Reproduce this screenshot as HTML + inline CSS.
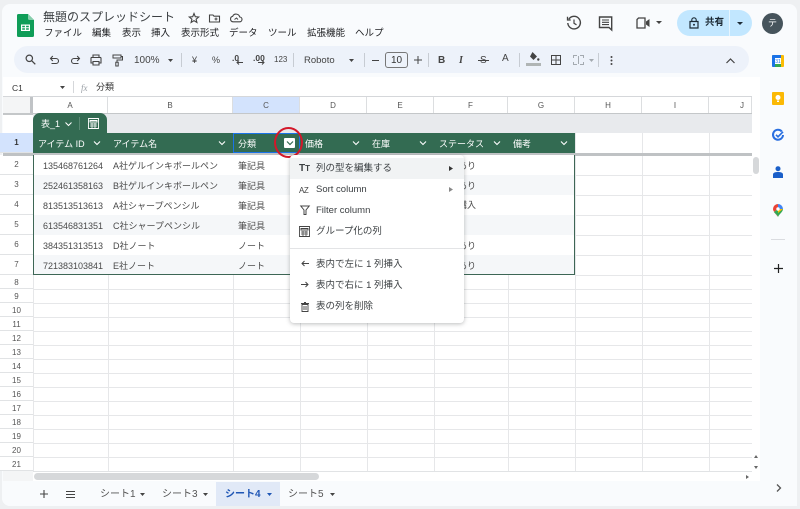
<!DOCTYPE html>
<html lang="ja"><head><meta charset="utf-8"><title>無題のスプレッドシート</title>
<style>
*{box-sizing:border-box}
html{background:#eef0f2}
html,body{margin:0;padding:0;width:800px;height:509px;overflow:hidden;font-family:"Liberation Sans","Noto Sans CJK JP",sans-serif;color:#3c4043}
body{background:#eef0f2;filter:blur(.3px)}
.a{position:absolute}
.t{position:absolute;white-space:nowrap;line-height:14px}
svg{position:absolute;overflow:visible}
.ln{position:absolute;background:#e6e7e9}
.ch{position:absolute;top:97px;height:16px;font-size:8px;line-height:17px;text-align:center;color:#555;border-right:1px solid #dcdee0;background:#fff}
.rh{position:absolute;left:0;width:33px;text-align:center;font-size:8px;color:#555;background:#fff;border-bottom:1px solid #e1e3e5}
.hc{position:absolute;top:137px;font-size:9px;color:#fff;line-height:14px;white-space:nowrap}
.c{position:absolute;font-size:9px;line-height:14px;color:#4a4a4a;white-space:nowrap}
.mi{position:absolute;left:316px;font-size:9.5px;color:#3c4043;line-height:14px;white-space:nowrap}
.mn{position:absolute;top:27px;font-size:9.5px;line-height:14px;color:#202124;white-space:nowrap}
</style></head><body>
<div class="a" style="left:2px;top:4px;width:795px;height:502px;background:#f9fbfd;border-radius:8px"></div>

<!-- sheets logo -->
<svg style="left:17px;top:14px" width="17" height="23" viewBox="0 0 17 23"><path d="M1.5 0H11L17 6V21.5a1.5 1.5 0 0 1-1.5 1.5H1.5A1.5 1.5 0 0 1 0 21.5V1.5A1.5 1.5 0 0 1 1.5 0Z" fill="#0f9d58"/><path d="M11 0L17 6H12.5A1.5 1.5 0 0 1 11 4.5Z" fill="#87ceac"/><path d="M4 10.5H13V17H4Z M5.2 11.7V13.2H7.9V11.7Z M9.1 11.7V13.2H11.8V11.7Z M5.2 14.3V15.8H7.9V14.3Z M9.1 14.3V15.8H11.8V14.3Z" fill="#fff" fill-rule="evenodd"/></svg>
<div class="t" style="left:43px;top:10px;font-size:12px;color:#3c4043">無題のスプレッドシート</div>
<svg style="left:188px;top:12px" width="12" height="12" viewBox="0 0 12 12"><path d="M6 1.5L7.3 4.7L10.7 5L8.1 7.200L8.900 10.500L6 8.700L3.100 10.500L3.900 7.200L1.300 5L4.700 4.700Z" fill="none" stroke="#444" stroke-width="1.100"/></svg>
<svg style="left:208px;top:12px" width="13" height="12" viewBox="0 0 13 12"><path d="M1.500 3H5L6 4.200H11.500V10H1.500Z" fill="none" stroke="#444" stroke-width="1.100"/><path d="M6.500 7H9.500M8 5.500V8.500" stroke="#444"/></svg>
<svg style="left:229px;top:12px" width="14" height="12" viewBox="0 0 14 12"><path d="M4 9.800A2.800 2.800 0 0 1 3.700 4.300A3.700 3.700 0 0 1 10.700 5A2.400 2.400 0 0 1 10.500 9.800Z" fill="none" stroke="#444" stroke-width="1.100"/><path d="M5.500 7.500L7.500 6L9 7.500" fill="none" stroke="#444"/></svg>

<div class="mn" style="left:44px">ファイル</div><div class="mn" style="left:92px">編集</div><div class="mn" style="left:122px">表示</div><div class="mn" style="left:151px">挿入</div><div class="mn" style="left:181px">表示形式</div><div class="mn" style="left:229px">データ</div><div class="mn" style="left:268px">ツール</div><div class="mn" style="left:307px">拡張機能</div><div class="mn" style="left:355px">ヘルプ</div>

<!-- top right -->
<svg style="left:566px;top:15px" width="16" height="16" viewBox="0 0 16 16"><path d="M2.800 4.200A6.300 6.300 0 1 1 1.800 8" fill="none" stroke="#444" stroke-width="1.400"/><path d="M1.500 1.800V5H4.700" fill="none" stroke="#444" stroke-width="1.300"/><path d="M8 4.500V8.300L10.500 9.800" fill="none" stroke="#444" stroke-width="1.200"/></svg>
<svg style="left:598px;top:16px" width="16" height="15" viewBox="0 0 16 15"><path d="M1.500 1H13.700V14L11 11.500H1.500Z" fill="none" stroke="#444" stroke-width="1.400"/><path d="M4 4H11M4 6.300H11M4 8.600H11" stroke="#444" stroke-width="1.100"/></svg>
<svg style="left:636px;top:17px" width="14" height="12" viewBox="0 0 14 12"><path d="M2.500 1H9V11H1V2.500Z" fill="none" stroke="#444" stroke-width="1.300"/><path d="M10 4.500L13.500 2V10L10 7.500Z" fill="#444"/></svg>
<svg style="left:656px;top:21px" width="6" height="3" viewBox="0 0 6 3"><path d="M0 0H6L3 3Z" fill="#444"/></svg>

<div class="a" style="left:677px;top:10px;width:75px;height:26px;border-radius:13px;background:#c2e7ff"></div>
<div class="a" style="left:729px;top:10px;width:1px;height:26px;background:#e6f5ff"></div>
<svg style="left:689px;top:17px" width="10" height="12" viewBox="0 0 10 12"><path d="M1 4.500H9V11H1Z" fill="none" stroke="#1d2b36" stroke-width="1.200"/><path d="M2.800 4.500V3A2.200 2.200 0 0 1 7.200 3V4.500" fill="none" stroke="#1d2b36" stroke-width="1.100"/><circle cx="5" cy="7.700" r="1" fill="#1d2b36"/></svg>
<div class="t" style="left:705px;top:16px;font-size:9.5px;font-weight:bold;color:#1d2b36">共有</div>
<svg style="left:737px;top:22px" width="6" height="3" viewBox="0 0 6 3"><path d="M0 0H6L3 3Z" fill="#1d2b36"/></svg>
<div class="a" style="left:762px;top:13px;width:21px;height:21px;border-radius:50%;background:#46545c;color:#fff;font-size:9px;line-height:21px;text-align:center">テ</div>

<!-- toolbar -->
<div class="a" style="left:14px;top:46px;width:735px;height:27px;border-radius:14px;background:#edf2fa"></div>
<svg style="left:25px;top:54px" width="11" height="11" viewBox="0 0 11 11"><circle cx="4.300" cy="4.300" r="3.200" fill="none" stroke="#444" stroke-width="1.200"/><path d="M6.800 6.800L10.300 10.300" stroke="#444" stroke-width="1.300"/></svg>
<svg style="left:49px;top:55px" width="11" height="10" viewBox="0 0 11 10"><path d="M2 3.500H7A2.500 2.500 0 0 1 7 8.500H2.500M3.800 1L1.500 3.500L3.800 6" fill="none" stroke="#444" stroke-width="1.100"/></svg>
<svg style="left:70px;top:55px" width="11" height="10" viewBox="0 0 11 10"><path d="M9 3.500H4A2.500 2.500 0 0 0 4 8.500H8.500M7.200 1L9.500 3.500L7.200 6" fill="none" stroke="#444" stroke-width="1.100"/></svg>
<svg style="left:90px;top:54px" width="12" height="12" viewBox="0 0 12 12"><path d="M3 3.500V1H9V3.500M3 9H1V4A.8.8 0 0 1 2 3.500H10A.8.8 0 0 1 11 4V9H9M3 7.500H9V11H3Z" fill="none" stroke="#444" stroke-width="1.100"/></svg>
<svg style="left:112px;top:54px" width="11" height="13" viewBox="0 0 11 13"><path d="M1 1H9V4H1Z M9 2.500H10.500V6H5V8M3.800 8.300H6.200V12H3.800Z" fill="none" stroke="#444" stroke-width="1"/></svg>
<div class="t" style="left:134px;top:54px;font-size:10px;color:#444">100%</div>
<svg style="left:168px;top:59px" width="5" height="3" viewBox="0 0 5 3"><path d="M0 0H5L2.500 3Z" fill="#444"/></svg>
<div class="a" style="left:181px;top:53px;width:1px;height:14px;background:#c7ccd3"></div>
<div class="t" style="left:192px;top:53px;font-size:9px;color:#444">¥</div>
<div class="t" style="left:212px;top:53px;font-size:9px;color:#444">%</div>
<div class="t" style="left:232px;top:51px;font-size:8.5px;font-weight:bold;color:#444">.0</div>
<svg style="left:236px;top:60px" width="7" height="5" viewBox="0 0 7 5"><path d="M7 2.500H1M3 .5L1 2.500L3 4.500" fill="none" stroke="#444"/></svg>
<div class="t" style="left:253px;top:51px;font-size:8.5px;font-weight:bold;color:#444">.00</div>
<svg style="left:258px;top:60px" width="7" height="5" viewBox="0 0 7 5"><path d="M0 2.500H6M4 .5L6 2.500L4 4.500" fill="none" stroke="#444"/></svg>
<div class="t" style="left:274px;top:53px;font-size:8px;color:#444">123</div>
<div class="a" style="left:293px;top:53px;width:1px;height:14px;background:#c7ccd3"></div>
<div class="t" style="left:304px;top:54px;font-size:9.5px;color:#444">Roboto</div>
<svg style="left:349px;top:59px" width="5" height="3" viewBox="0 0 5 3"><path d="M0 0H5L2.500 3Z" fill="#444"/></svg>
<div class="a" style="left:364px;top:53px;width:1px;height:14px;background:#c7ccd3"></div>
<div class="a" style="left:372px;top:60px;width:7px;height:1px;background:#444"></div>
<div class="a" style="left:385px;top:52px;width:23px;height:16px;border:1px solid #777;border-radius:3px;font-size:10px;line-height:15px;text-align:center;color:#333">10</div>
<svg style="left:414px;top:56px" width="8" height="8" viewBox="0 0 8 8"><path d="M4 0V8M0 4H8" stroke="#444" stroke-width="1"/></svg>
<div class="a" style="left:428px;top:53px;width:1px;height:14px;background:#c7ccd3"></div>
<div class="t" style="left:438px;top:54px;font-size:10px;font-weight:bold;color:#444">B</div>
<div class="t" style="left:459px;top:54px;font-size:10px;font-weight:bold;font-style:italic;color:#444;font-family:'Liberation Serif',serif">I</div>
<div class="t" style="left:480px;top:54px;font-size:10px;color:#444">S</div>
<div class="a" style="left:478px;top:60px;width:11px;height:1px;background:#444"></div>
<div class="t" style="left:502px;top:52px;font-size:10px;color:#444">A</div>
<div class="a" style="left:519px;top:53px;width:1px;height:14px;background:#c7ccd3"></div>
<svg style="left:528px;top:51px" width="12" height="11" viewBox="0 0 12 11"><path d="M4.500 1L9 5.500L5.500 9L2 5.500Z" fill="#444"/><circle cx="10.300" cy="8.500" r="1.200" fill="#444"/></svg>
<div class="a" style="left:526px;top:63px;width:15px;height:3px;background:#b0b5b5"></div>
<svg style="left:551px;top:55px" width="10" height="10" viewBox="0 0 10 10"><path d="M.5.500H9.500V9.500H.5Z M5 .5V9.500M.5 5H9.500" fill="none" stroke="#444"/></svg>
<svg style="left:573px;top:55px" width="11" height="10" viewBox="0 0 11 10"><path d="M.5 3V.5H4M7 .5H10.500V3M.5 7V9.500H4M7 9.500H10.500V7M5.500 1V9" fill="none" stroke="#a4aab0"/></svg>
<svg style="left:589px;top:59px" width="5" height="3" viewBox="0 0 5 3"><path d="M0 0H5L2.500 3Z" fill="#a4aab0"/></svg>
<div class="a" style="left:598px;top:53px;width:1px;height:14px;background:#c7ccd3"></div>
<svg style="left:610px;top:56px" width="3" height="9" viewBox="0 0 3 9"><circle cx="1.500" cy="1" r="1" fill="#444"/><circle cx="1.500" cy="4.500" r="1" fill="#444"/><circle cx="1.500" cy="8" r="1" fill="#444"/></svg>
<svg style="left:726px;top:58px" width="9" height="6" viewBox="0 0 9 6"><path d="M.5 5L4.500 1L8.500 5" fill="none" stroke="#444" stroke-width="1.200"/></svg>

<!-- formula bar -->
<div class="a" style="left:3px;top:77px;width:757px;height:20px;background:#fff"></div>
<div class="t" style="left:12px;top:81px;font-size:8.5px;color:#333">C1</div>
<svg style="left:60px;top:86px" width="5" height="3" viewBox="0 0 5 3"><path d="M0 0H5L2.500 3Z" fill="#444"/></svg>
<div class="a" style="left:73px;top:81px;width:1px;height:12px;background:#d5d7da"></div>
<div class="t" style="left:81px;top:81px;font-size:9px;font-style:italic;color:#9aa0a6;font-family:'Liberation Serif',serif">fx</div>
<div class="t" style="left:96px;top:80px;font-size:9px;color:#333">分類</div>

<!-- grid -->
<div class="a" style="left:3px;top:97px;width:757px;height:384px;background:#fff"></div>
<div class="a" style="left:3px;top:96px;width:749px;height:1px;background:#d5d7da"></div>
<div class="a" style="left:3px;top:97px;width:30px;height:16px;background:#f4f5f6"></div>
<div class="a" style="left:30px;top:97px;width:3px;height:16px;background:#c0c3c6"></div>
<div class="ch" style="left:33px;width:75px">A</div><div class="ch" style="left:108px;width:125px">B</div><div class="ch" style="left:233px;width:67px;background:#d3e3fd">C</div><div class="ch" style="left:300px;width:67px">D</div><div class="ch" style="left:367px;width:67px">E</div><div class="ch" style="left:434px;width:74px">F</div><div class="ch" style="left:508px;width:67px">G</div><div class="ch" style="left:575px;width:67px">H</div><div class="ch" style="left:642px;width:67px">I</div><div class="ch" style="left:709px;width:43px;text-align:right;padding-right:7px">J</div>
<div class="a" style="left:3px;top:113px;width:749px;height:1.5px;background:#c4c7c9"></div>

<!-- vertical grid lines -->
<div class="ln" style="left:108px;top:275px;width:1px;height:196px"></div><div class="ln" style="left:233px;top:275px;width:1px;height:196px"></div><div class="ln" style="left:300px;top:275px;width:1px;height:196px"></div><div class="ln" style="left:367px;top:275px;width:1px;height:196px"></div><div class="ln" style="left:434px;top:275px;width:1px;height:196px"></div><div class="ln" style="left:508px;top:275px;width:1px;height:196px"></div><div class="ln" style="left:575px;top:133px;width:1px;height:338px"></div><div class="ln" style="left:642px;top:133px;width:1px;height:338px"></div><div class="ln" style="left:709px;top:133px;width:1px;height:338px"></div><div class="ln" style="left:33px;top:275px;width:1px;height:196px"></div>
<!-- horizontal lines right of table -->
<div class="ln" style="left:575px;top:175px;width:177px;height:1px"></div><div class="ln" style="left:575px;top:195px;width:177px;height:1px"></div><div class="ln" style="left:575px;top:215px;width:177px;height:1px"></div><div class="ln" style="left:575px;top:235px;width:177px;height:1px"></div><div class="ln" style="left:575px;top:255px;width:177px;height:1px"></div><div class="ln" style="left:575px;top:275px;width:177px;height:1px"></div>
<div class="ln" style="left:33px;top:289px;width:719px;height:1px"></div><div class="ln" style="left:33px;top:303px;width:719px;height:1px"></div><div class="ln" style="left:33px;top:317px;width:719px;height:1px"></div><div class="ln" style="left:33px;top:331px;width:719px;height:1px"></div><div class="ln" style="left:33px;top:345px;width:719px;height:1px"></div><div class="ln" style="left:33px;top:359px;width:719px;height:1px"></div><div class="ln" style="left:33px;top:373px;width:719px;height:1px"></div><div class="ln" style="left:33px;top:387px;width:719px;height:1px"></div><div class="ln" style="left:33px;top:401px;width:719px;height:1px"></div><div class="ln" style="left:33px;top:415px;width:719px;height:1px"></div><div class="ln" style="left:33px;top:429px;width:719px;height:1px"></div><div class="ln" style="left:33px;top:443px;width:719px;height:1px"></div><div class="ln" style="left:33px;top:457px;width:719px;height:1px"></div>

<!-- row headers -->
<div class="rh" style="top:133px;height:20px;line-height:20px;background:#d3e3fd;font-weight:bold;color:#333">1</div>
<div class="rh" style="top:155px;height:20px;line-height:20px">2</div><div class="rh" style="top:175px;height:20px;line-height:20px">3</div><div class="rh" style="top:195px;height:20px;line-height:20px">4</div><div class="rh" style="top:215px;height:20px;line-height:20px">5</div><div class="rh" style="top:235px;height:20px;line-height:20px">6</div><div class="rh" style="top:255px;height:20px;line-height:20px">7</div>
<div class="rh" style="top:275px;height:14px;line-height:15px">8</div><div class="rh" style="top:289px;height:14px;line-height:15px">9</div><div class="rh" style="top:303px;height:14px;line-height:15px">10</div><div class="rh" style="top:317px;height:14px;line-height:15px">11</div><div class="rh" style="top:331px;height:14px;line-height:15px">12</div><div class="rh" style="top:345px;height:14px;line-height:15px">13</div><div class="rh" style="top:359px;height:14px;line-height:15px">14</div><div class="rh" style="top:373px;height:14px;line-height:15px">15</div><div class="rh" style="top:387px;height:14px;line-height:15px">16</div><div class="rh" style="top:401px;height:14px;line-height:15px">17</div><div class="rh" style="top:415px;height:14px;line-height:15px">18</div><div class="rh" style="top:429px;height:14px;line-height:15px">19</div><div class="rh" style="top:443px;height:14px;line-height:15px">20</div><div class="rh" style="top:457px;height:14px;line-height:15px">21</div>

<!-- table -->
<div class="a" style="left:33px;top:114px;width:719px;height:19px;background:#e8eaed"></div>
<div class="a" style="left:33px;top:113px;width:74px;height:20px;background:#336b52;border-radius:7px 7px 0 0"></div>
<div class="t" style="left:41px;top:117px;font-size:9px;color:#fff">表_1</div>
<svg style="left:65px;top:122px" width="7" height="5" viewBox="0 0 7 5"><path d="M.5.5L3.500 3.500L6.500.5" fill="none" stroke="#fff" stroke-width="1"/></svg>
<div class="a" style="left:79px;top:117px;width:1px;height:13px;background:#5a8a74"></div>
<svg style="left:88px;top:118px" width="11" height="11" viewBox="0 0 11 11"><path d="M.5.500H10.500V10.500H.5Z M2 2.500H9V4H2Z" fill="none" stroke="#fff" stroke-width=".9"/><path d="M2 6H9M2 8H9M4 5V10M7 5V10" stroke="#fff" stroke-width=".8"/></svg>

<div class="a" style="left:33px;top:133px;width:542px;height:20px;background:#336b52"></div>
<div class="a" style="left:3px;top:153px;width:749px;height:2.5px;background:#bfc2c4"></div>
<div class="a" style="left:33px;top:155px;width:542px;height:120px;background:#fff;border:1px solid #3d6655;border-top:none"></div>
<div class="a" style="left:34px;top:175px;width:540px;height:20px;background:#f5f7f9"></div>
<div class="a" style="left:34px;top:215px;width:540px;height:20px;background:#f5f7f9"></div>
<div class="a" style="left:34px;top:255px;width:540px;height:19px;background:#f5f7f9"></div>
<div class="a" style="left:233px;top:133px;width:67px;height:20px;border:1.5px solid #1a73e8"></div>

<div class="hc" style="left:38px">アイテム ID</div><div class="hc" style="left:113px">アイテム名</div><div class="hc" style="left:238px">分類</div><div class="hc" style="left:305px">価格</div><div class="hc" style="left:372px">在庫</div><div class="hc" style="left:439px">ステータス</div><div class="hc" style="left:513px">備考</div>
<svg style="left:93px;top:141px" width="8" height="5" viewBox="0 0 8 5"><path d="M1 .5L4 3.500L7 .5" fill="none" stroke="#fff" stroke-width="1.100"/></svg>
<svg style="left:218px;top:141px" width="8" height="5" viewBox="0 0 8 5"><path d="M1 .5L4 3.500L7 .5" fill="none" stroke="#fff" stroke-width="1.100"/></svg>
<svg style="left:352px;top:141px" width="8" height="5" viewBox="0 0 8 5"><path d="M1 .5L4 3.500L7 .5" fill="none" stroke="#fff" stroke-width="1.100"/></svg>
<svg style="left:419px;top:141px" width="8" height="5" viewBox="0 0 8 5"><path d="M1 .5L4 3.500L7 .5" fill="none" stroke="#fff" stroke-width="1.100"/></svg>
<svg style="left:493px;top:141px" width="8" height="5" viewBox="0 0 8 5"><path d="M1 .5L4 3.500L7 .5" fill="none" stroke="#fff" stroke-width="1.100"/></svg>
<svg style="left:560px;top:141px" width="8" height="5" viewBox="0 0 8 5"><path d="M1 .5L4 3.500L7 .5" fill="none" stroke="#fff" stroke-width="1.100"/></svg>
<div class="a" style="left:284px;top:138px;width:11px;height:10px;background:#fff;border-radius:1px"></div>
<svg style="left:285.500px;top:141px" width="8" height="5" viewBox="0 0 8 5"><path d="M1 .5L4 3.500L7 .5" fill="none" stroke="#336b52" stroke-width="1.200"/></svg>
<div class="a" style="left:274px;top:127px;width:29px;height:31px;border:2px solid #d3182a;border-radius:50%"></div>

<div class="c" style="left:43px;top:159px">135468761264</div><div class="c" style="left:113px;top:159px">A社ゲルインキボールペン</div><div class="c" style="left:238px;top:159px">筆記具</div>
<div class="c" style="left:43px;top:179px">252461358163</div><div class="c" style="left:113px;top:179px">B社ゲルインキボールペン</div><div class="c" style="left:238px;top:179px">筆記具</div>
<div class="c" style="left:43px;top:199px">813513513613</div><div class="c" style="left:113px;top:199px">A社シャープペンシル</div><div class="c" style="left:238px;top:199px">筆記具</div>
<div class="c" style="left:43px;top:219px">613546831351</div><div class="c" style="left:113px;top:219px">C社シャープペンシル</div><div class="c" style="left:238px;top:219px">筆記具</div>
<div class="c" style="left:43px;top:239px">384351313513</div><div class="c" style="left:113px;top:239px">D社ノート</div><div class="c" style="left:238px;top:239px">ノート</div>
<div class="c" style="left:43px;top:259px">721383103841</div><div class="c" style="left:113px;top:259px">E社ノート</div><div class="c" style="left:238px;top:259px">ノート</div>
<div class="c" style="left:458px;top:159px">あり</div><div class="c" style="left:458px;top:179px">あり</div><div class="c" style="left:449px;top:198px">要購入</div><div class="c" style="left:458px;top:239px">あり</div><div class="c" style="left:458px;top:259px">あり</div>

<!-- context menu -->
<div class="a" style="left:290px;top:155px;width:174px;height:168px;background:#fff;border-radius:4px;box-shadow:0 1px 4px rgba(60,64,67,.35)"></div>
<div class="a" style="left:290px;top:158px;width:174px;height:21px;background:#f1f3f4"></div>
<div class="t" style="left:299px;top:162px;font-size:10px;font-weight:bold;color:#3c4043">T<span style="font-size:8px">T</span></div>
<div class="mi" style="top:162px">列の型を編集する</div>
<svg style="left:449px;top:166px" width="4" height="5" viewBox="0 0 4 5"><path d="M0 0L4 2.500L0 5Z" fill="#333"/></svg>
<div class="t" style="left:299px;top:184px;font-size:8px;color:#444;letter-spacing:-.5px">AZ</div>
<div class="mi" style="top:183px">Sort column</div>
<svg style="left:449px;top:187px" width="4" height="5" viewBox="0 0 4 5"><path d="M0 0L4 2.500L0 5Z" fill="#888"/></svg>
<svg style="left:300px;top:205px" width="10" height="10" viewBox="0 0 10 10"><path d="M.8 1H9.200L6 5V9.500H4V5Z" fill="none" stroke="#444" stroke-width="1"/></svg>
<div class="mi" style="top:204px">Filter column</div>
<svg style="left:299px;top:226px" width="11" height="11" viewBox="0 0 11 11"><path d="M.5.500H10.500V10.500H.5Z M2 2.500H9V4H2Z" fill="none" stroke="#444" stroke-width=".9"/><path d="M2 6H9M2 8H9M4 5V10M7 5V10" stroke="#444" stroke-width=".8"/></svg>
<div class="mi" style="top:225px">グループ化の列</div>
<div class="a" style="left:290px;top:248px;width:174px;height:1px;background:#e3e4e6"></div>
<svg style="left:301px;top:260px" width="8" height="7" viewBox="0 0 8 7"><path d="M8 3.500H1M3.500 1L1 3.500L3.500 6" fill="none" stroke="#444"/></svg>
<div class="mi" style="top:258px">表内で左に 1 列挿入</div>
<svg style="left:301px;top:281px" width="8" height="7" viewBox="0 0 8 7"><path d="M0 3.500H7M4.500 1L7 3.500L4.500 6" fill="none" stroke="#444"/></svg>
<div class="mi" style="top:279px">表内で右に 1 列挿入</div>
<svg style="left:301px;top:302px" width="8" height="10" viewBox="0 0 8 10"><path d="M1 2.500H7V9.500H1Z M0 1.500H8M3 .5H5M3 4V8M5 4V8" fill="none" stroke="#444" stroke-width=".9"/></svg>
<div class="mi" style="top:300px">表の列を削除</div>

<!-- scrollbars -->
<div class="a" style="left:3px;top:471px;width:757px;height:10px;background:#fff;border-top:1px solid #e1e3e5"></div>
<div class="a" style="left:3px;top:471px;width:30px;height:10px;background:#f4f5f6"></div>
<div class="a" style="left:34px;top:473px;width:285px;height:7px;border-radius:4px;background:#d6d8da"></div>
<div class="a" style="left:752px;top:97px;width:8px;height:384px;background:#fff"></div>
<div class="a" style="left:753px;top:157px;width:6px;height:17px;border-radius:3px;background:#d6d8da"></div>
<svg style="left:754px;top:455px" width="4" height="3" viewBox="0 0 4 3"><path d="M0 3L2 0L4 3Z" fill="#666"/></svg>
<svg style="left:754px;top:466px" width="4" height="3" viewBox="0 0 4 3"><path d="M0 0L4 0L2 3Z" fill="#666"/></svg>
<svg style="left:746px;top:475px" width="3" height="4" viewBox="0 0 3 4"><path d="M0 0L3 2L0 4Z" fill="#666"/></svg>

<!-- side panel -->
<div class="a" style="left:760px;top:40px;width:37px;height:466px;background:#f9fbfd"></div>
<svg style="left:772px;top:55px" width="12" height="12" viewBox="0 0 12 12"><rect width="12" height="12" rx="1" fill="#fbbc04"/><path d="M0 1A1 1 0 0 1 1 0H9V3H3V12H1A1 1 0 0 1 0 11Z" fill="#1a73e8"/><path d="M3 9H9V12H3Z" fill="#34a853"/><path d="M3 3H9V9H3Z" fill="#fff"/><text x="6" y="8" font-size="5" text-anchor="middle" fill="#1a73e8" font-family="Liberation Sans">31</text></svg>
<svg style="left:772px;top:92px" width="12" height="13" viewBox="0 0 12 13"><rect width="12" height="13" rx="1" fill="#fbb905"/><circle cx="6" cy="5.500" r="2.500" fill="#fff"/><rect x="5" y="8.500" width="2" height="1.500" fill="#fff"/></svg>
<svg style="left:772px;top:129px" width="12" height="12" viewBox="0 0 12 12"><path d="M9.800 2.500A5 5 0 1 0 11 6" fill="none" stroke="#2a6fe0" stroke-width="2"/><path d="M4 5.800L6 7.800L11 2.800" fill="none" stroke="#2a6fe0" stroke-width="1.700"/></svg>
<svg style="left:773px;top:166px" width="10" height="12" viewBox="0 0 10 12"><circle cx="5" cy="2.700" r="2.500" fill="#1a5fc9"/><path d="M0 12V8.500C0 6.500 2.500 6 5 6S10 6.500 10 8.500V12Z" fill="#1a5fc9"/></svg>
<svg style="left:773px;top:204px" width="10" height="13" viewBox="0 0 10 13"><path d="M5 13C3.500 9.500 0 8 0 5A5 5 0 0 1 5 0V5L1 8Z" fill="#ea4335"/><path d="M5 0A5 5 0 0 1 10 5L5 5Z" fill="#4285f4"/><path d="M10 5C10 8 6.500 9.500 5 13C4.500 11 2 9.500 1 8L5 5Z" fill="#34a853"/><path d="M10 5L5 9L5 5Z" fill="#fbbc04"/><circle cx="5" cy="5" r="1.700" fill="#fff"/></svg>
<div class="a" style="left:771px;top:239px;width:14px;height:1px;background:#dadce0"></div>
<svg style="left:774px;top:264px" width="9" height="9" viewBox="0 0 9 9"><path d="M4.500 0V9M0 4.500H9" stroke="#222" stroke-width="1.200"/></svg>

<!-- bottom bar -->
<div class="a" style="left:2px;top:481px;width:795px;height:25px;background:#f9fbfd;border-radius:0 0 8px 8px"></div>
<div class="a" style="left:216px;top:482px;width:64px;height:24px;background:#e1e9f7"></div>
<svg style="left:40px;top:490px" width="8" height="8" viewBox="0 0 8 8"><path d="M4 0V8M0 4H8" stroke="#444" stroke-width="1.100"/></svg>
<svg style="left:65px;top:491px" width="11" height="7" viewBox="0 0 11 7"><path d="M1 .5H10M1 3.500H10M1 6.500H10" stroke="#444" stroke-width="1"/></svg>
<div class="t" style="left:100px;top:487px;font-size:10px;color:#555;line-height:15px">シート1</div>
<svg style="left:140px;top:493px" width="5" height="3" viewBox="0 0 5 3"><path d="M0 0H5L2.500 3Z" fill="#444"/></svg>
<div class="t" style="left:162px;top:487px;font-size:10px;color:#555;line-height:15px">シート3</div>
<svg style="left:203px;top:493px" width="5" height="3" viewBox="0 0 5 3"><path d="M0 0H5L2.500 3Z" fill="#444"/></svg>
<div class="t" style="left:225px;top:487px;font-size:10px;font-weight:bold;color:#1f56b5;line-height:15px">シート4</div>
<svg style="left:267px;top:493px" width="5" height="3" viewBox="0 0 5 3"><path d="M0 0H5L2.500 3Z" fill="#1f56b5"/></svg>
<div class="t" style="left:288px;top:487px;font-size:10px;color:#555;line-height:15px">シート5</div>
<svg style="left:330px;top:493px" width="5" height="3" viewBox="0 0 5 3"><path d="M0 0H5L2.500 3Z" fill="#444"/></svg>
<svg style="left:776px;top:484px" width="6" height="8" viewBox="0 0 6 8"><path d="M1 .5L4.500 4L1 7.500" fill="none" stroke="#555" stroke-width="1.300"/></svg>
</body></html>
